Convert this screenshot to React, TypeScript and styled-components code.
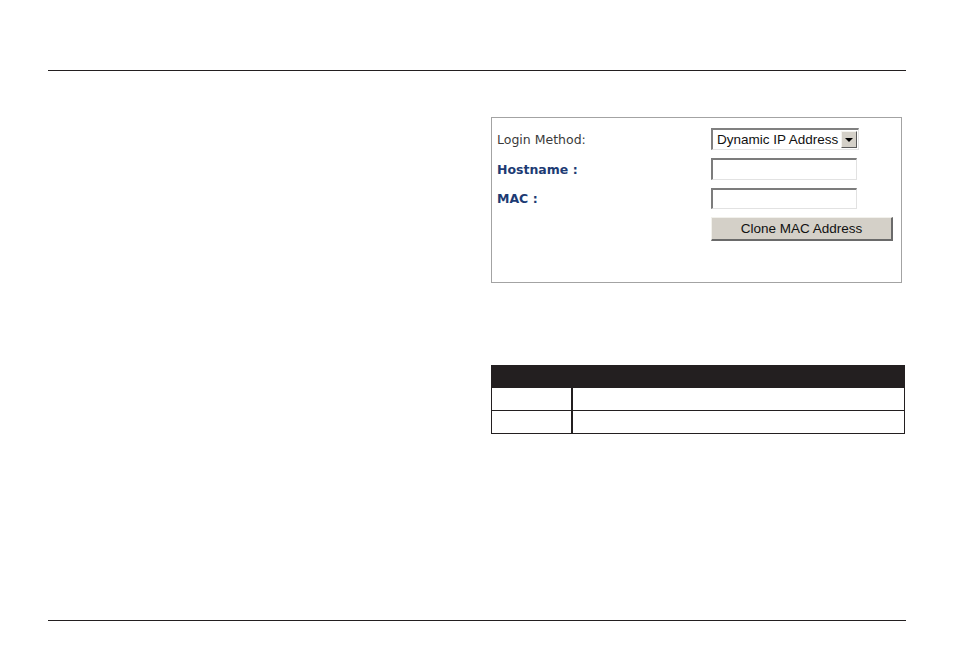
import React from "react";
import styled, { createGlobalStyle } from "styled-components";

const GlobalStyle = createGlobalStyle`
  html, body {
    margin: 0;
    padding: 0;
    background: #ffffff;
  }
`;

const Page = styled.div`
  width: 954px;
  height: 668px;
  box-sizing: border-box;
  padding: 70px 48px 0 48px;
  display: flex;
  flex-direction: column;
`;

const Rule = styled.div<{ $bottom?: boolean }>`
  height: 1px;
  background: #231f20;
  margin-top: ${({ $bottom }) => ($bottom ? "auto" : "0")};
  margin-bottom: ${({ $bottom }) => ($bottom ? "47px" : "0")};
`;

const Content = styled.div`
  display: grid;
  grid-template-columns: 443px 414px;
`;

const RightColumn = styled.div`
  grid-column: 2;
  display: flex;
  flex-direction: column;
`;

const Panel = styled.div`
  margin-top: 46px;
  width: 411px;
  height: 166px;
  box-sizing: border-box;
  border: 1px solid #a3a3a3;
  padding: 10px 0 0 5px;
  display: grid;
  grid-template-columns: 214px auto;
  grid-auto-rows: min-content;
  row-gap: 8px;
  align-items: center;
`;

const Label = styled.span<{ $strong?: boolean }>`
  font-family: "DejaVu Sans", Verdana, sans-serif;
  font-size: 12.5px;
  line-height: 1;
  padding-top: 2px;
  font-weight: ${({ $strong }) => ($strong ? 700 : 400)};
  color: ${({ $strong }) => ($strong ? "#1d3b74" : "#3a3a3a")};
`;

const Select = styled.div`
  width: 148px;
  height: 22px;
  box-sizing: border-box;
  border-top: 2px solid #808080;
  border-left: 2px solid #808080;
  border-right: 1px solid #e4e4e4;
  border-bottom: 1px solid #e4e4e4;
  display: flex;
  align-items: center;
  justify-content: space-between;
  background: #fff;
`;

const SelectText = styled.span`
  font-family: "Liberation Sans", Arial, sans-serif;
  font-size: 13.5px;
  color: #111;
  padding-left: 4px;
  white-space: nowrap;
`;

const ArrowBox = styled.span`
  width: 16px;
  height: 17px;
  box-sizing: border-box;
  margin-right: 1px;
  background: #d4d0c8;
  border-top: 1px solid #f4f3ef;
  border-left: 1px solid #f4f3ef;
  border-right: 1px solid #5a5a5a;
  border-bottom: 1px solid #5a5a5a;
  display: flex;
  align-items: center;
  justify-content: center;
`;

const Arrow = styled.span`
  width: 0;
  height: 0;
  border-left: 4px solid transparent;
  border-right: 4px solid transparent;
  border-top: 4px solid #000;
`;

const TextBox = styled.div<{ $height: number }>`
  width: 146px;
  height: ${({ $height }) => $height}px;
  box-sizing: border-box;
  border-top: 2px solid #7c7c7c;
  border-left: 2px solid #7c7c7c;
  border-right: 1px solid #e2e2e2;
  border-bottom: 1px solid #e2e2e2;
  background: #fff;
`;

const Button = styled.div`
  width: 182px;
  height: 24px;
  box-sizing: border-box;
  background: #d4d0c8;
  border-top: 1px solid #f2f1ec;
  border-left: 1px solid #f2f1ec;
  border-right: 2px solid #6a6a6a;
  border-bottom: 2px solid #6a6a6a;
  display: flex;
  align-items: center;
  justify-content: center;
  font-family: "Liberation Sans", Arial, sans-serif;
  font-size: 13.5px;
  color: #111;
`;

const Table = styled.div`
  margin-top: 82px;
  width: 414px;
  display: flex;
  flex-direction: column;
`;

const TableHead = styled.div`
  height: 23px;
  background: #231f20;
`;

const TableRow = styled.div`
  height: 23px;
  box-sizing: border-box;
  display: grid;
  grid-template-columns: 81px 1fr;
  border-left: 1px solid #231f20;
  border-right: 1px solid #231f20;
  border-bottom: 1px solid #231f20;
`;

const KeyCell = styled.div`
  border-right: 2px solid #231f20;
`;

const ValueCell = styled.div``;

const App: React.FC = () => {
  return (
    <>
      <GlobalStyle />
      <Page>
        <Rule />
        <Content>
          <RightColumn>
            <Panel>
              <Label>Login Method:</Label>
              <Select>
                <SelectText>Dynamic IP Address</SelectText>
                <ArrowBox>
                  <Arrow />
                </ArrowBox>
              </Select>
              <Label $strong>Hostname :</Label>
              <TextBox $height={22} />
              <Label $strong>MAC :</Label>
              <TextBox $height={21} />
              <span />
              <Button>Clone MAC Address</Button>
            </Panel>
            <Table>
              <TableHead />
              <TableRow>
                <KeyCell />
                <ValueCell />
              </TableRow>
              <TableRow>
                <KeyCell />
                <ValueCell />
              </TableRow>
            </Table>
          </RightColumn>
        </Content>
        <Rule $bottom />
      </Page>
    </>
  );
};

export default App;
